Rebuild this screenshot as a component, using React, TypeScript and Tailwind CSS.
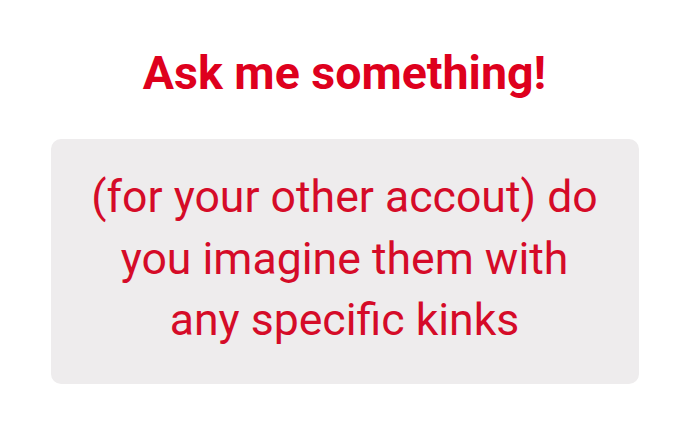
export default function App() {
  return (
    <div className="w-[689px] h-[436px] bg-white flex flex-col items-center pt-[43px] font-['Roboto',sans-serif]">
      <h1 className="text-[46.5px] leading-[60px] font-bold text-[#de001d]">Ask me something!</h1>
      <div className="mt-[36px] w-[588px] h-[245px] rounded-[10px] bg-[#eeeced] flex items-center justify-center pb-[4px]">
        <p className="w-[516px] text-center text-[44.6px] leading-[61.5px] text-[#d50b28]">
          (for your other accout) do you imagine them with any specific kinks
        </p>
      </div>
    </div>
  );
}
